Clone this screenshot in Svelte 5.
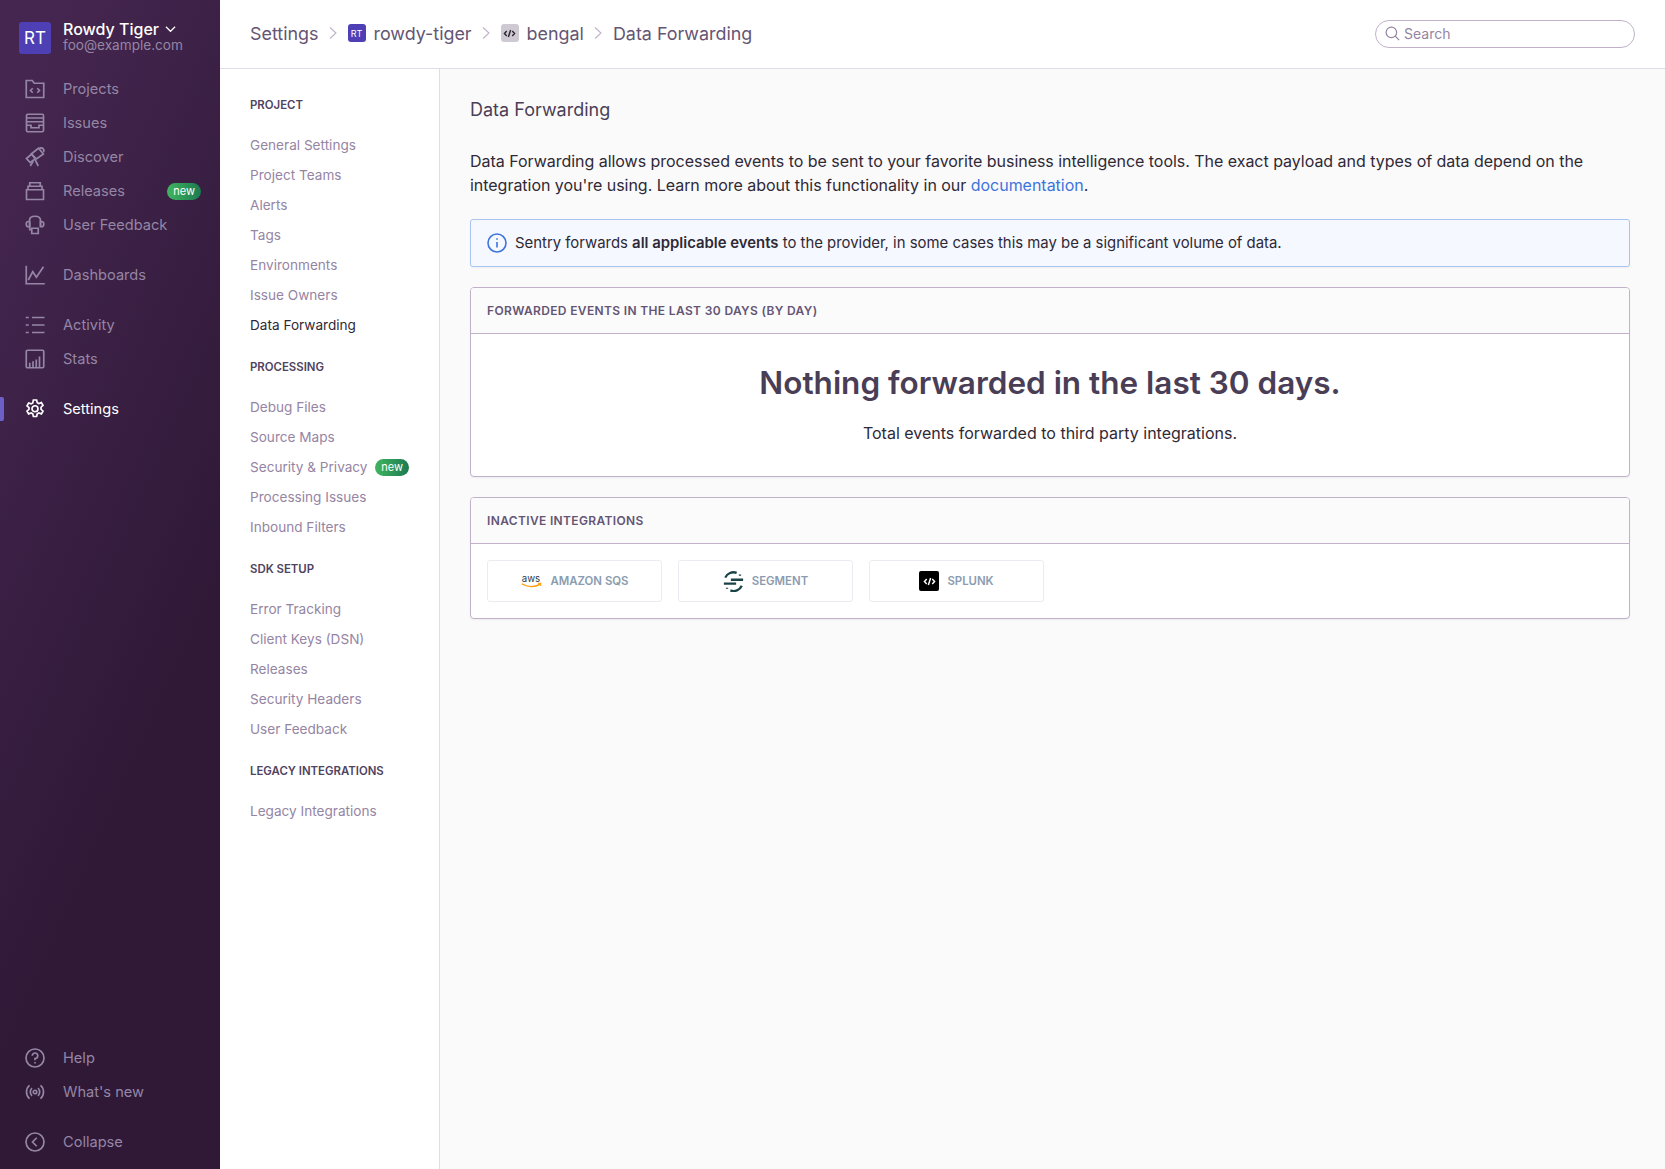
<script>
	const icons = {
		projects: ['M1 1.2h4.8l1.6 2.2H15v11.4H1z', 'M6.2 7.4 4.4 9.2l1.8 1.8M9.8 7.4l1.8 1.8L9.8 11'],
		issues: ['M2.2 1h11.6a1 1 0 0 1 1 1v12a1 1 0 0 1-1 1H2.2a1 1 0 0 1-1-1V2a1 1 0 0 1 1-1z', 'M1.2 4h13.6M1.2 7h13.6', 'M1.2 9.8h3.6v2h6.4v-2h3.6'],
		discover: ['M5.2 5.4 10.8 1l3.9 4.6-5.6 4z', 'M1.2 9.2 5.2 5.8l3 3.6-4 3z', 'M8.2 10.4 10.6 15.2M6.6 11.4l-2.4 3.8', 'M11.6 1.2c.6-.7 2-.8 2.8.1s.7 2.2.2 2.8'],
		releases: ['M1.2 7h13.6v7.8H1.2z', 'M2.4 7V4.2h11.2V7', 'M3.8 4.2V1.4h8.4v2.8'],
		feedback: ['M3.6 5.2V4.4C3.6 2.4 5.4 1 8 1s4.4 1.4 4.4 3.4v5', 'M3.6 5.2H2.8A1.8 1.8 0 0 0 1 7v.6a1.8 1.8 0 0 0 1.8 1.8h.8zM12.4 5.2h.8A1.8 1.8 0 0 1 15 7v.6a1.8 1.8 0 0 1-1.8 1.8h-.8z', 'M3.8 5.4v6.4h1.6', 'M5.4 10.6h5.2v4.2H5.4z'],
		dashboards: ['M1 .6v14.4h14.8', 'M2.6 12 6.2 5.4l2.9 4.4L14.8 1.4'],
		activity: ['M5.6 2h10M5.6 8h10M5.6 14h10', 'M.6 2h2.4M.6 8h2.4M.6 14h2.4'],
		stats: ['M2 1h12a1 1 0 0 1 1 1v12a1 1 0 0 1-1 1H2a1 1 0 0 1-1-1V2a1 1 0 0 1 1-1z', 'M3.8 15v-4M6.4 15v-5.2M9 15V8.4M11.6 15V6'],
		settings: ['M6.7.8h2.6l.5 2.1 1.3.7 2-.7 1.3 2.2-1.6 1.5v1.6l1.6 1.5-1.3 2.2-2-.7-1.3.7-.5 2.1H6.7l-.5-2.1-1.3-.7-2 .7-1.3-2.2 1.6-1.5V6.9L1.6 5.4l1.3-2.2 2 .7 1.3-.7z', 'M8 5.4a2.4 2.4 0 1 0 0 4.8 2.4 2.4 0 0 0 0-4.8z'],
		help: ['M8 .8a7.2 7.2 0 1 0 0 14.4A7.2 7.2 0 0 0 8 .8z', 'M5.8 6.2A2.2 2.2 0 1 1 8 8.4v1.4', 'M8 11.2v1.2'],
		whatsnew: ['M3.6 2.6c-3.2 3-3.2 7.8 0 10.8M12.4 2.6c3.2 3 3.2 7.8 0 10.8', 'M5.6 4.8c-1.8 1.8-1.8 4.6 0 6.4M10.4 4.8c1.8 1.8 1.8 4.6 0 6.4', 'M8 6.6a1.4 1.4 0 1 0 0 2.8 1.4 1.4 0 0 0 0-2.8z'],
		collapse: ['M8 .8a7.2 7.2 0 1 0 0 14.4A7.2 7.2 0 0 0 8 .8z', 'M9.4 4.6 6 8l3.4 3.4']
	};

	const mainNav = [
		[
			{ label: 'Projects', icon: 'projects' },
			{ label: 'Issues', icon: 'issues' },
			{ label: 'Discover', icon: 'discover' },
			{ label: 'Releases', icon: 'releases', badge: true },
			{ label: 'User Feedback', icon: 'feedback' }
		],
		[{ label: 'Dashboards', icon: 'dashboards' }],
		[
			{ label: 'Activity', icon: 'activity' },
			{ label: 'Stats', icon: 'stats' }
		],
		[{ label: 'Settings', icon: 'settings', active: true }]
	];

	const bottomNav = [
		[
			{ label: 'Help', icon: 'help' },
			{ label: "What's new", icon: 'whatsnew' }
		],
		[{ label: 'Collapse', icon: 'collapse' }]
	];

	const settingsNav = [
		{
			title: 'Project',
			items: ['General Settings', 'Project Teams', 'Alerts', 'Tags', 'Environments', 'Issue Owners', 'Data Forwarding']
		},
		{
			title: 'Processing',
			items: ['Debug Files', 'Source Maps', 'Security & Privacy', 'Processing Issues', 'Inbound Filters']
		},
		{
			title: 'SDK Setup',
			items: ['Error Tracking', 'Client Keys (DSN)', 'Releases', 'Security Headers', 'User Feedback']
		},
		{ title: 'Legacy Integrations', items: ['Legacy Integrations'] }
	];
</script>

{#snippet navIcon(name)}
	<svg class="nav-icon" viewBox="0 0 16 16" fill="none" stroke="currentColor" stroke-width="1.35">
		{#each icons[name] as d}
			<path {d} />
		{/each}
	</svg>
{/snippet}

{#snippet navGroups(groups)}
	{#each groups as group}
		<div class="nav-group">
			{#each group as item}
				<div class="nav-item" class:active={item.active}>
					{@render navIcon(item.icon)}
					<span class="nav-label">{item.label}</span>
					{#if item.badge}<span class="badge side-badge">new</span>{/if}
				</div>
			{/each}
		</div>
	{/each}
{/snippet}

{#snippet chevron()}
	<svg class="crumb-sep" viewBox="0 0 10 16" fill="none" stroke="currentColor" stroke-width="1.1">
		<path d="M2 2.5 8 8l-6 5.5" />
	</svg>
{/snippet}

{#snippet codeGlyph()}
	<svg viewBox="0 0 16 16" fill="none" stroke="currentColor" stroke-width="1.8">
		<path d="M4.6 5 1.8 8l2.8 3M11.4 5 14.2 8l-2.8 3M9.4 3.6 6.6 12.4" />
	</svg>
{/snippet}

<div class="app">
	<aside class="sidebar">
		<div class="org">
			<div class="avatar">RT</div>
			<div class="org-text">
				<div class="org-name">
					Rowdy Tiger
					<svg viewBox="0 0 12 8" fill="none" stroke="currentColor" stroke-width="1.3"><path d="M1 1.5 6 6.5l5-5" /></svg>
				</div>
				<div class="org-email">foo@example.com</div>
			</div>
		</div>
		<nav class="side-nav">
			{@render navGroups(mainNav)}
		</nav>
		<nav class="side-nav bottom">
			{@render navGroups(bottomNav)}
		</nav>
	</aside>

	<div class="main">
		<header class="topbar">
			<div class="crumbs">
				<span>Settings</span>
				{@render chevron()}
				<span class="crumb-avatar org-mini">RT</span>
				<span>rowdy-tiger</span>
				{@render chevron()}
				<span class="crumb-avatar project-mini">{@render codeGlyph()}</span>
				<span>bengal</span>
				{@render chevron()}
				<span>Data Forwarding</span>
			</div>
			<div class="search">
				<svg viewBox="0 0 16 16" fill="none" stroke="currentColor" stroke-width="1.3">
					<path d="M6.8 1.2a5.6 5.6 0 1 0 0 11.2 5.6 5.6 0 0 0 0-11.2zM11 10.8l4 4.2" />
				</svg>
				<span>Search</span>
			</div>
		</header>

		<div class="body">
			<nav class="settings-nav">
				{#each settingsNav as section}
					<div class="settings-section">
						<div class="settings-title">{section.title}</div>
						{#each section.items as item}
							<div class="settings-item" class:current={item === 'Data Forwarding'}>
								{item}
								{#if item === 'Security & Privacy'}<span class="badge">new</span>{/if}
							</div>
						{/each}
					</div>
				{/each}
			</nav>

			<main class="content">
				<h1>Data Forwarding</h1>
				<p class="intro">
					Data Forwarding allows processed events to be sent to your favorite business intelligence tools. The exact payload and types of data depend on the integration you're using. Learn more about this functionality in our <a href="#docs">documentation</a>.
				</p>

				<div class="alert">
					<svg viewBox="0 0 20 20" fill="none" stroke="currentColor" stroke-width="1.6">
						<circle cx="10" cy="10" r="9" />
						<path d="M10 9v5.4M10 5.2v1.6" />
					</svg>
					<span>Sentry forwards <strong>all applicable events</strong> to the provider, in some cases this may be a significant volume of data.</span>
				</div>

				<section class="panel">
					<div class="panel-head">Forwarded Events in the Last 30 Days (by day)</div>
					<div class="empty">
						<h2>Nothing forwarded in the last 30 days.</h2>
						<p>Total events forwarded to third party integrations.</p>
					</div>
				</section>

				<section class="panel">
					<div class="panel-head">Inactive Integrations</div>
					<div class="integrations">
						<div class="integration">
							<svg class="aws" viewBox="0 0 24 18" fill="none">
								<text x="12" y="9" text-anchor="middle" font-size="10.5" fill="#2d3a4a">aws</text>
								<path d="M2 11.5c6 4 14 4 20 .4" stroke="#f90" stroke-width="1.5" />
								<path d="M19.6 11h3v3" stroke="#f90" stroke-width="1.1" />
							</svg>
							<span>Amazon SQS</span>
						</div>
						<div class="integration">
							<svg class="segment" viewBox="0 0 24 24" fill="none" stroke="#1a4348" stroke-width="2.6">
								<path d="M9 10h14M1 14.4h14" />
								<path d="M2.6 7.6A10 10 0 0 1 15.6 2.2M21.4 16.8A10 10 0 0 1 8.4 22.2" />
								<path d="M19.4 4v1.4M4.6 19v1.4" />
							</svg>
							<span>Segment</span>
						</div>
						<div class="integration">
							<span class="splunk">{@render codeGlyph()}</span>
							<span>Splunk</span>
						</div>
					</div>
				</section>
			</main>
		</div>
	</div>
</div>

<style>
	:global(body) {
		margin: 0;
		font-family: Inter, 'Liberation Sans', sans-serif;
		color: #2f2936;
		background: #fafafb;
	}

	.app {
		display: flex;
		min-height: 1169px;
	}

	.sidebar {
		width: 220px;
		flex-shrink: 0;
		display: flex;
		flex-direction: column;
		background: linear-gradient(294.17deg, #2f1937 35.57%, #452650 92.42%);
		color: #9586a5;
	}

	.org {
		display: flex;
		align-items: center;
		gap: 12px;
		padding: 21px 19px 0;
		height: 33px;
	}

	.avatar {
		width: 32px;
		height: 32px;
		border-radius: 3px;
		background: #4e3fb4;
		color: #fff;
		font-size: 17px;
		display: flex;
		align-items: center;
		justify-content: center;
	}

	.org-name {
		display: flex;
		align-items: center;
		gap: 6px;
		margin-top: -2px;
		color: #fff;
		font-size: 16px;
		font-weight: 500;
		line-height: 18px;
	}

	.org-name svg {
		width: 11px;
		height: 8px;
	}

	.org-email {
		font-size: 13.6px;
		line-height: 15px;
	}

	.side-nav {
		padding-top: 18px;
	}

	.side-nav.bottom {
		margin-top: auto;
		padding-bottom: 10px;
	}

	.nav-group + .nav-group {
		margin-top: 16px;
	}

	.nav-item {
		position: relative;
		display: flex;
		align-items: center;
		height: 34px;
		padding: 0 19px 0 25px;
		font-size: 14.6px;
	}

	.nav-item.active {
		color: #fff;
	}

	.nav-item.active::before {
		content: '';
		position: absolute;
		left: 0;
		top: 5px;
		bottom: 5px;
		width: 4px;
		border-radius: 0 2px 2px 0;
		background: #6c5fc7;
	}

	.nav-icon {
		width: 20px;
		height: 20px;
		margin-right: 18px;
		flex-shrink: 0;
	}

	.badge {
		display: inline-block;
		height: 17px;
		line-height: 16px;
		padding: 0 6px;
		border-radius: 9px;
		background: linear-gradient(90deg, #40b55f, #1d7a52);
		color: #fff;
		font-size: 11px;
		margin-left: 4px;
		vertical-align: 1px;
	}

	.side-badge {
		margin-left: auto;
	}

	.main {
		flex: 1;
		min-width: 0;
	}

	.topbar {
		display: flex;
		align-items: center;
		justify-content: space-between;
		box-sizing: border-box;
		height: 69px;
		padding: 0 30px;
		background: #fff;
		border-bottom: 1px solid #e2dbe8;
	}

	.crumbs {
		display: flex;
		align-items: center;
		margin-bottom: 2px;
		color: #645574;
		font-size: 17.9px;
	}

	.crumb-sep {
		width: 10px;
		height: 16px;
		margin: 0 9.5px;
		color: #c1b2ca;
	}

	.crumb-avatar {
		width: 18px;
		height: 18px;
		border-radius: 3px;
		margin-right: 8px;
		display: flex;
		align-items: center;
		justify-content: center;
	}

	.crumb-avatar svg {
		width: 13px;
		height: 13px;
	}

	.org-mini {
		background: #4e3fb4;
		color: #fff;
		font-size: 9px;
	}

	.project-mini {
		background: #cfc9d4;
		color: #2f2936;
	}

	.search {
		display: flex;
		align-items: center;
		gap: 4px;
		box-sizing: border-box;
		width: 260px;
		height: 28px;
		padding: 0 9px 1px;
		border: 1px solid #c1b2ca;
		border-radius: 14px;
		color: #9585a3;
		font-size: 14px;
	}

	.search svg {
		width: 15px;
		height: 15px;
	}

	.body {
		display: flex;
	}

	.settings-nav {
		box-sizing: border-box;
		width: 220px;
		flex-shrink: 0;
		min-height: 1100px;
		padding: 28px 0 0 30px;
		background: #fff;
		border-right: 1px solid #e2dbe8;
	}

	.settings-section + .settings-section {
		margin-top: 19px;
	}

	.settings-title {
		height: 16px;
		line-height: 16px;
		margin-bottom: 17px;
		color: #4f4360;
		font-size: 11.4px;
		font-weight: 600;
		text-transform: uppercase;
	}

	.settings-item {
		height: 30px;
		line-height: 30px;
		color: #9585a3;
		font-size: 13.6px;
		white-space: nowrap;
	}

	.settings-item.current {
		color: #2f2936;
	}

	.content {
		flex: 1;
		min-width: 0;
		padding: 28px 35px 0 30px;
	}

	h1 {
		margin: 0 0 26px;
		color: #4a3e56;
		font-size: 18px;
		font-weight: 400;
		line-height: 26px;
	}

	.intro {
		margin: 0 0 22px;
		font-size: 16px;
		line-height: 24px;
		letter-spacing: -0.03px;
	}

	.intro a {
		color: #3d74db;
		text-decoration: none;
	}

	.alert {
		display: flex;
		align-items: center;
		gap: 8px;
		box-sizing: border-box;
		height: 48px;
		padding: 0 16px;
		margin-bottom: 20px;
		background: #f5f8ff;
		border: 1px solid #a8c4f3;
		border-radius: 3px;
		box-shadow: 0 1px 2px rgba(0, 0, 0, 0.05);
		font-size: 14.9px;
	}

	.alert svg {
		width: 20px;
		height: 20px;
		color: #3d74db;
		flex-shrink: 0;
	}

	.alert strong {
		font-weight: 600;
	}

	.panel {
		margin-bottom: 20px;
		background: #fff;
		border: 1px solid #c1b2ca;
		border-radius: 4px;
		box-shadow: 0 1px 2px rgba(0, 0, 0, 0.06);
		overflow: hidden;
	}

	.panel-head {
		height: 45px;
		line-height: 45px;
		padding: 0 16px;
		background: #fbfbfc;
		border-bottom: 1px solid #c1b2ca;
		color: #645574;
		font-size: 12px;
		font-weight: 600;
		letter-spacing: 0.35px;
		text-transform: uppercase;
	}

	.empty {
		padding: 31px 16px 31px;
		text-align: center;
	}

	.empty h2 {
		margin: 0 0 20px;
		color: #4a3e56;
		font-size: 31.5px;
		font-weight: 600;
		line-height: 36px;
	}

	.empty p {
		margin: 0;
		font-size: 16px;
		line-height: 24px;
	}

	.integrations {
		display: flex;
		gap: 16px;
		padding: 16px;
	}

	.integration {
		display: flex;
		align-items: center;
		justify-content: center;
		gap: 8px;
		box-sizing: border-box;
		width: 175px;
		height: 42px;
		border: 1px solid #eeeaf1;
		border-radius: 3px;
		color: #8b9cb0;
		font-size: 11.4px;
		font-weight: 600;
		text-transform: uppercase;
	}

	.aws {
		width: 22px;
		height: 17px;
		text-transform: none;
		font-weight: 400;
	}

	.segment {
		width: 21px;
		height: 21px;
	}

	.splunk {
		display: flex;
		align-items: center;
		justify-content: center;
		width: 20px;
		height: 20px;
		border-radius: 2px;
		background: #000;
		color: #fff;
	}

	.splunk svg {
		width: 13px;
		height: 13px;
	}
</style>
